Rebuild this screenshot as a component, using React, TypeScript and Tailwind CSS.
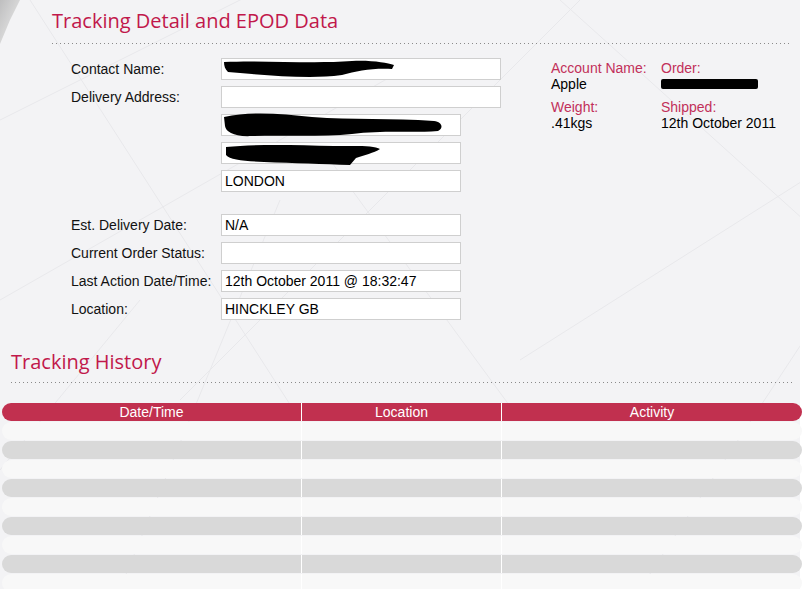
import React from "react";

const heading = "font-['Open_Sans',sans-serif] text-[20px] leading-[26px] text-[#c1184b]";
const body = "font-['Liberation_Sans',Arial,sans-serif] text-[14px] leading-[16px]";
const dots =
  "h-px bg-[linear-gradient(to_right,#8a8a8a_1px,transparent_1px)] bg-[length:4px_1px]";

// black marker scribble used over private values
const Scribble = ({ w, h, d }: { w: number; h: number; d: string }) => (
  <svg width={w} height={h} viewBox={`0 0 ${w} ${h}`} className="absolute left-0 top-0">
    <path d={d} fill="#000" />
  </svg>
);

const Field = ({
  width,
  value,
  children,
}: {
  width: string;
  value?: string;
  children?: React.ReactNode;
}) => (
  <div className={`relative h-[22px] ${width} border border-[#cfcfcf] bg-white px-[3px] ${body} leading-[20px] text-black`}>
    {value}
    {children}
  </div>
);

const Row = ({ label, children }: { label?: string; children: React.ReactNode }) => (
  <div className="flex items-center">
    <div className={`w-[150px] ${body} text-[#111]`}>{label}</div>
    {children}
  </div>
);

const Backdrop = () => (
  <svg className="absolute inset-0" width="804" height="589" viewBox="0 0 804 589">
    <defs>
      <linearGradient id="corner" x1="0" y1="0" x2="1" y2="1">
        <stop offset="0" stopColor="#a8a8a8" />
        <stop offset="1" stopColor="#ececec" />
      </linearGradient>
    </defs>
    <path d="M0 0 L20 0 L10 20 L0 44 Z" fill="url(#corner)" opacity="0.7" />
    <g stroke="#e8e8eb" strokeWidth="1" fill="none">
      <path d="M30 0 L300 420" />
      <path d="M0 120 L260 -10" />
      <path d="M0 300 L420 60" />
      <path d="M120 589 L280 200" />
      <path d="M330 160 L520 420" />
      <path d="M180 400 L600 -20" />
      <path d="M520 360 L804 180" />
      <path d="M640 589 L804 340" />
      <path d="M560 0 L804 220" />
      <path d="M0 470 L140 300" />
    </g>
    <rect x="800" y="0" width="4" height="589" fill="#ffffff" />
  </svg>
);

const cols = ["w-[299px]", "w-[200px] border-l border-white", "flex-1 border-l border-white"];

const TableRow = ({ tone, cells }: { tone: string; cells?: string[] }) => (
  <div className="flex h-[18px] overflow-hidden rounded-full">
    {cols.map((c, i) => (
      <div
        key={i}
        className={`${c} ${tone} flex items-center justify-center ${body} text-white`}
      >
        {cells ? cells[i] : ""}
      </div>
    ))}
  </div>
);

export default function App() {
  const rows = Array.from({ length: 9 });

  return (
    <div className="relative h-[589px] w-[804px] overflow-hidden bg-[#f3f3f5]">
      <Backdrop />

      <div className="relative">
        {/* Tracking detail */}
        <section className="pl-[52px] pr-[12px] pt-[8px]">
          <h1 className={heading}>Tracking Detail and EPOD Data</h1>
          <div className={`mt-[9px] ${dots}`} />

          <div className="mt-[14px] flex items-start">
            <div className="flex w-[499px] flex-col gap-[6px] pl-[19px]">
              <Row label="Contact Name:">
                <Field width="w-[280px]">
                  <Scribble
                    w={176}
                    h={22}
                    d="M2 3 C40 1 90 5 130 2 C150 1 165 4 172 6 L170 10 C150 9 135 12 120 16 C90 20 60 17 30 15 L6 13 C3 10 2 7 2 3 Z"
                  />
                </Field>
              </Row>
              <Row label="Delivery Address:">
                <Field width="w-[280px]" />
              </Row>
              <Row>
                <Field width="w-[240px]">
                  <div className="absolute left-0 top-[-3px]">
                    <Scribble
                      w={222}
                      h={26}
                      d="M2 5 C30 -1 60 2 90 5 C130 8 170 6 212 9 C220 10 222 16 216 19 C190 21 160 18 130 22 C100 25 60 23 30 24 C12 25 4 20 3 14 Z"
                    />
                  </div>
                </Field>
              </Row>
              <Row>
                <Field width="w-[240px]">
                  <div className="absolute left-[2px] top-0">
                    <Scribble
                      w={158}
                      h={24}
                      d="M2 4 C30 1 70 2 110 3 C130 3 150 2 156 6 C150 10 140 12 132 15 L126 22 C100 21 70 20 40 19 C20 18 6 17 2 12 Z"
                    />
                  </div>
                </Field>
              </Row>
              <Row>
                <Field width="w-[240px]" value="LONDON" />
              </Row>

              <div className="h-[10px]" />

              <Row label="Est. Delivery Date:">
                <Field width="w-[240px]" value="N/A" />
              </Row>
              <Row label="Current Order Status:">
                <Field width="w-[240px]" />
              </Row>
              <Row label="Last Action Date/Time:">
                <Field width="w-[240px]" value="12th October 2011 @ 18:32:47" />
              </Row>
              <Row label="Location:">
                <Field width="w-[240px]" value="HINCKLEY GB" />
              </Row>
            </div>

            {/* order summary */}
            <div className={`mt-[2px] grid grid-cols-[110px_1fr] content-start gap-y-[7px] ${body}`}>
              <div>
                <div className="text-[#c2305a]">Account Name:</div>
                <div className="text-black">Apple</div>
              </div>
              <div>
                <div className="text-[#c2305a]">Order:</div>
                <div className="mt-[3px] h-[10px] w-[97px] rounded-[2px] bg-black" />
              </div>
              <div>
                <div className="text-[#c2305a]">Weight:</div>
                <div className="text-black">.41kgs</div>
              </div>
              <div>
                <div className="text-[#c2305a]">Shipped:</div>
                <div className="text-black">12th October 2011</div>
              </div>
            </div>
          </div>
        </section>

        {/* Tracking history */}
        <section className="pl-[11px] pr-[12px] pt-[29px]">
          <h2 className={heading}>Tracking History</h2>
          <div className={`mt-[7px] ${dots}`} />
        </section>

        <div className="mt-[20px] flex flex-col gap-px pl-[2px] pr-[2px]">
          <TableRow tone="bg-[#c1304f]" cells={["Date/Time", "Location", "Activity"]} />
          {rows.map((_, i) => (
            <TableRow key={i} tone={i % 2 === 0 ? "bg-[#f8f8f8]" : "bg-[#d9d9d9]"} />
          ))}
        </div>
      </div>
    </div>
  );
}
